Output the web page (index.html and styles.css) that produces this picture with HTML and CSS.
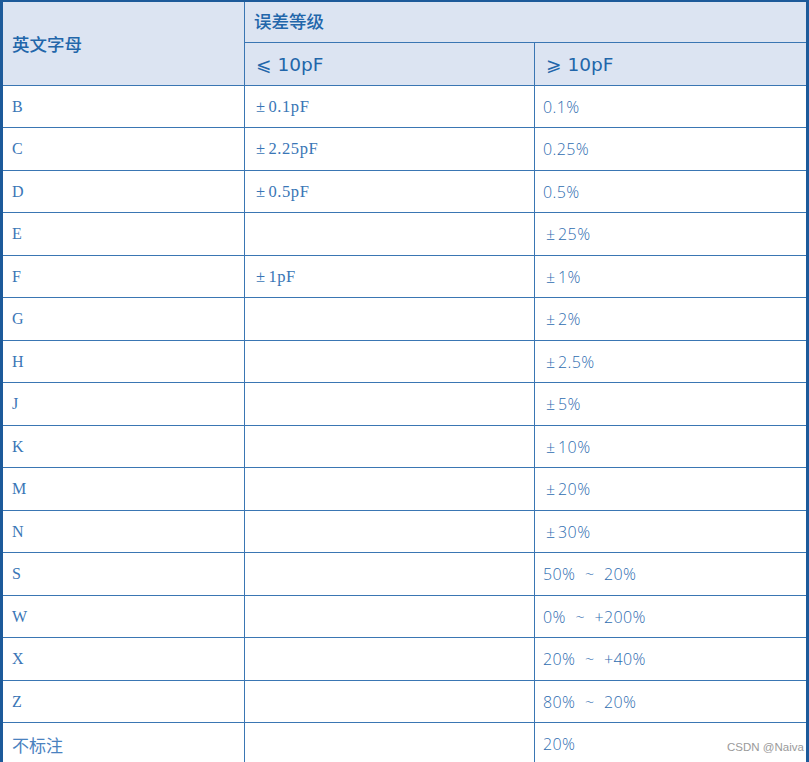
FILE: index.html
```html
<!DOCTYPE html>
<html lang="zh">
<head>
<meta charset="utf-8">
<title>误差等级</title>
<link rel="stylesheet" href="styles.css">
</head>
<body>
<div class="sheet">
  <div class="hd hd-letter">英文字母</div>
  <div class="hd hd-group">误差等级</div>
  <div class="hd hd-sub">⩽ 10pF</div>
  <div class="hd hd-sub">⩾ 10pF</div>

  <div class="c k">B</div><div class="c v">± 0.1pF</div><div class="c p">0.1%</div>
  <div class="c k">C</div><div class="c v">± 2.25pF</div><div class="c p">0.25%</div>
  <div class="c k">D</div><div class="c v">± 0.5pF</div><div class="c p">0.5%</div>
  <div class="c k">E</div><div class="c v"></div><div class="c p pm">± 25%</div>
  <div class="c k">F</div><div class="c v">± 1pF</div><div class="c p pm">± 1%</div>
  <div class="c k">G</div><div class="c v"></div><div class="c p pm">± 2%</div>
  <div class="c k">H</div><div class="c v"></div><div class="c p pm">± 2.5%</div>
  <div class="c k">J</div><div class="c v"></div><div class="c p pm">± 5%</div>
  <div class="c k">K</div><div class="c v"></div><div class="c p pm">± 10%</div>
  <div class="c k">M</div><div class="c v"></div><div class="c p pm">± 20%</div>
  <div class="c k">N</div><div class="c v"></div><div class="c p pm">± 30%</div>
  <div class="c k">S</div><div class="c v"></div><div class="c p">50% ~ 20%</div>
  <div class="c k">W</div><div class="c v"></div><div class="c p">0% ~ +200%</div>
  <div class="c k">X</div><div class="c v"></div><div class="c p">20% ~ +40%</div>
  <div class="c k">Z</div><div class="c v"></div><div class="c p">80% ~ 20%</div>
  <div class="c k cjk">不标注</div><div class="c v"></div><div class="c p">20%</div>
</div>
<div class="mark">CSDN @Naiva</div>
</body>
</html>
```

FILE: styles.css
```css
html, body {
  margin: 0;
  padding: 0;
  background: #ffffff;
  overflow: hidden;
}

.sheet {
  box-sizing: border-box;
  width: 809px;
  display: grid;
  grid-template-columns: 241px 289px 271px;
  grid-template-rows: 40px 42px repeat(8, 41px 42px);
  gap: 1px;
  background: #3a76b3;
  border-top: 2px solid #1d5a9a;
  border-left: 3px solid #1d5a9a;
  border-right: 3px solid #1d5a9a;
}

.hd {
  background: #dce4f2;
  color: #2266aa;
  display: flex;
  align-items: center;
  font-family: "Noto Sans CJK SC", "Liberation Sans", sans-serif;
  font-weight: 500;
  font-size: 17.5px;
}

.hd-letter {
  grid-row: 1 / span 2;
  padding-left: 9px;
}

.hd-group {
  grid-column: 2 / span 2;
  padding-left: 9px;
  padding-bottom: 3px;
}

.hd-sub {
  font-family: "DejaVu Sans", "Liberation Sans", sans-serif;
  font-weight: 400;
  font-size: 18.5px;
  padding-left: 11px;
}
.hd-sub:last-child { padding-left: 8px; }

.c {
  background: #ffffff;
  display: flex;
  align-items: center;
  color: #3a76b6;
  font-size: 16px;
}

.k {
  font-family: "Liberation Serif", serif;
  padding-left: 9px;
}

.k.cjk {
  font-family: "Noto Sans CJK SC", sans-serif;
  font-size: 17px;
  font-weight: 400;
  color: #4a82bf;
}

.v {
  font-family: "Liberation Serif", serif;
  font-size: 16.5px;
  letter-spacing: 0.6px;
  word-spacing: -2px;
  padding-left: 11px;
}

.p {
  font-family: "Open Sans", "Liberation Sans", sans-serif;
  font-size: 16px;
  font-weight: 300;
  color: #2f6db0;
  letter-spacing: 0.4px;
  padding-left: 8px;
  white-space: pre;
  word-spacing: 5px;
}

.p.pm { padding-left: 11px; word-spacing: -2px; }

.mark {
  position: absolute;
  left: 727px;
  top: 741px;
  font-family: "Liberation Sans", sans-serif;
  font-size: 11.5px;
  color: #9a9a9a;
}
```
